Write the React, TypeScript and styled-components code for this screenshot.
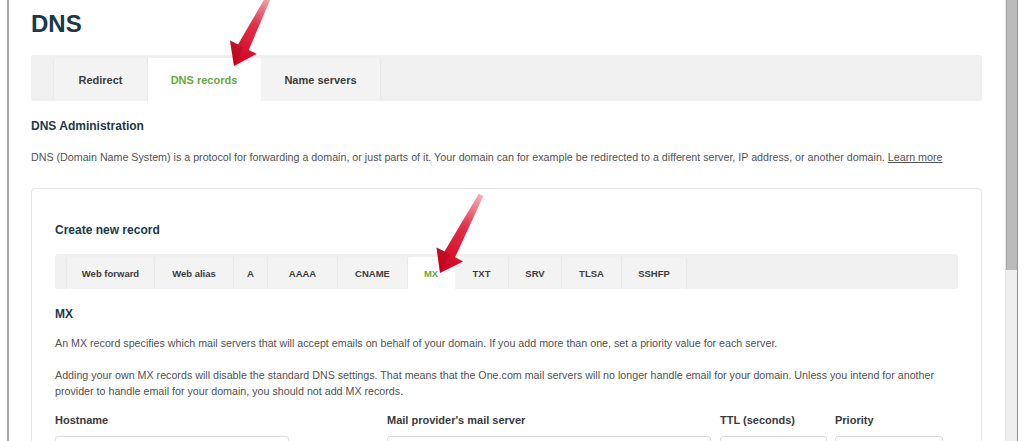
import React from 'react'
import styled, { createGlobalStyle } from 'styled-components'

const GlobalStyle = createGlobalStyle`
  html, body {
    margin: 0;
    padding: 0;
    background: #fff;
  }
  body {
    font-family: 'Liberation Sans', Arial, sans-serif;
    color: #4a4a4a;
  }
  * {
    box-sizing: border-box;
  }
`

const Shell = styled.div`
  position: relative;
  display: flex;
  width: 1024px;
  height: 441px;
  overflow: hidden;
  background: #fff;
`

const Page = styled.main`
  flex: 1;
  min-width: 0;
  margin-left: 7px;
  border-left: 2px solid #a6a6a6;
  padding: 10px 23px 0 22px;
`

const Scrollbar = styled.div`
  width: 13px;
  margin-right: 6px;
  background: #efefef;
  border-left: 1px solid #e2e2e2;
  border-right: 1px solid #8f8f8f;
`

const Thumb = styled.div`
  height: 270px;
  background: #bbbbbb;
  border-left: 1px solid #a9a9a9;
`

const Title = styled.h1`
  margin: 0;
  font-size: 24px;
  line-height: 28px;
  font-weight: 700;
  color: #1a3846;
`

const TabBar = styled.div<{ $inset: number; $height: number; $gap: number }>`
  display: flex;
  align-items: flex-end;
  height: ${p => p.$height}px;
  margin-top: ${p => p.$gap}px;
  padding-left: ${p => p.$inset}px;
  background: #f0f0f0;
  border-radius: 3px;
`

const Tab = styled.div<{ $active?: boolean; $small?: boolean; $width: number }>`
  display: flex;
  align-items: center;
  justify-content: center;
  width: ${p => p.$width}px;
  height: calc(100% - 3px);
  background: ${p => (p.$active ? '#fff' : '#f3f3f3')};
  border-right: 1px solid ${p => (p.$active ? '#fff' : '#e9e9e9')};
  border-radius: 2px 2px 0 0;
  font-size: ${p => (p.$small ? '9.5px' : '11px')};
  font-weight: 700;
  color: ${p => (p.$active ? '#66a83e' : '#3c3c3c')};
  white-space: nowrap;
  &:first-child {
    border-left: 1px solid #e9e9e9;
  }
`

const SectionTitle = styled.h2<{ $gap: number }>`
  margin: ${p => p.$gap}px 0 0;
  font-size: 12px;
  line-height: 16px;
  font-weight: 700;
  color: #1c3a48;
`

const Text = styled.p<{ $gap: number }>`
  margin: ${p => p.$gap}px 0 0;
  font-size: 10.7px;
  line-height: 16px;
  color: #525252;
`

const MoreLink = styled.a`
  color: #525252;
  text-decoration: underline;
`

const Card = styled.section`
  margin-top: 23px;
  height: 300px;
  border: 1px solid #e6e6e6;
  border-radius: 4px;
  padding: 33px 23px 0;
`

const FormGrid = styled.div`
  display: grid;
  grid-template-columns: 332px 333px 115px 108px;
  margin-top: 13px;
`

const Field = styled.div`
  display: flex;
  flex-direction: column;
  gap: 8px;
`

const Label = styled.label`
  font-size: 11px;
  line-height: 16px;
  font-weight: 700;
  color: #3a3a3a;
`

const Input = styled.input<{ $width: number }>`
  width: ${p => p.$width}px;
  height: 32px;
  border: 1px solid #dcdcdc;
  border-radius: 3px;
  background: #fff;
  outline: none;
`

const Overlay = styled.svg`
  position: absolute;
  left: 0;
  top: 0;
  pointer-events: none;
`

const topTabs = [
  { label: 'Redirect', width: 95 },
  { label: 'DNS records', width: 113 },
  { label: 'Name servers', width: 120 }
]

const recordTabs = [
  { label: 'Web forward', width: 89 },
  { label: 'Web alias', width: 79 },
  { label: 'A', width: 34 },
  { label: 'AAAA', width: 70 },
  { label: 'CNAME', width: 70 },
  { label: 'MX', width: 47 },
  { label: 'TXT', width: 54 },
  { label: 'SRV', width: 53 },
  { label: 'TLSA', width: 60 },
  { label: 'SSHFP', width: 65 }
]

const fields = [
  { label: 'Hostname', width: 234 },
  { label: "Mail provider's mail server", width: 324 },
  { label: 'TTL (seconds)', width: 107 },
  { label: 'Priority', width: 108 }
]

type Pt = [number, number]

function Arrow({ tail, tip, id }: { tail: Pt; tip: Pt; id: string }) {
  const dx = tip[0] - tail[0]
  const dy = tip[1] - tail[1]
  const len = Math.hypot(dx, dy)
  const u: Pt = [dx / len, dy / len]
  const v: Pt = [u[1], -u[0]]
  const at = (base: Pt, k: number): Pt => [base[0] + v[0] * k, base[1] + v[1] * k]
  const b: Pt = [tip[0] - u[0] * 21, tip[1] - u[1] * 21]
  const pts = [tip, at(b, -15), at(b, -6), at(tail, -2.5), at(tail, 2.5), at(b, 6), at(b, 15)]
  const shade = [tip, at(b, -15), at(b, -6), b]
  const str = (list: Pt[]) => list.map(p => p.join(',')).join(' ')

  return (
    <g>
      <defs>
        <linearGradient
          id={id}
          gradientUnits="userSpaceOnUse"
          x1={tail[0]}
          y1={tail[1]}
          x2={tip[0]}
          y2={tip[1]}
        >
          <stop offset="0" stopColor="#f4b0b8" />
          <stop offset="0.4" stopColor="#e43049" />
          <stop offset="1" stopColor="#cc001d" />
        </linearGradient>
      </defs>
      <polygon points={str(pts)} fill={`url(#${id})`} />
      <polygon points={str(shade)} fill="#a00014" opacity="0.3" />
    </g>
  )
}

export default function App() {
  return (
    <>
      <GlobalStyle />
      <Shell>
        <Page>
          <Title>DNS</Title>
          <TabBar $inset={22} $height={46} $gap={17}>
            {topTabs.map(t => (
              <Tab key={t.label} $width={t.width} $active={t.label === 'DNS records'}>
                {t.label}
              </Tab>
            ))}
          </TabBar>

          <SectionTitle $gap={17}>DNS Administration</SectionTitle>
          <Text $gap={15}>
            DNS (Domain Name System) is a protocol for forwarding a domain, or just parts of it. Your
            domain can for example be redirected to a different server, IP address, or another
            domain. <MoreLink href="#">Learn more</MoreLink>
          </Text>

          <Card>
            <SectionTitle $gap={0}>Create new record</SectionTitle>
            <TabBar $inset={11} $height={35} $gap={16}>
              {recordTabs.map(t => (
                <Tab key={t.label} $small $width={t.width} $active={t.label === 'MX'}>
                  {t.label}
                </Tab>
              ))}
            </TabBar>

            <SectionTitle $gap={17}>MX</SectionTitle>
            <Text $gap={13}>
              An MX record specifies which mail servers that will accept emails on behalf of your
              domain. If you add more than one, set a priority value for each server.
            </Text>
            <Text $gap={16}>
              Adding your own MX records will disable the standard DNS settings. That means that the
              One.com mail servers will no longer handle email for your domain. Unless you intend for
              another provider to handle email for your domain, you should not add MX records.
            </Text>

            <FormGrid>
              {fields.map(f => (
                <Field key={f.label}>
                  <Label>{f.label}</Label>
                  <Input $width={f.width} />
                </Field>
              ))}
            </FormGrid>
          </Card>
        </Page>
        <Scrollbar>
          <Thumb />
        </Scrollbar>

        <Overlay width={1024} height={441}>
          <Arrow id="arrow-top" tail={[269, -4]} tip={[234, 66]} />
          <Arrow id="arrow-mx" tail={[481, 195]} tip={[440, 273]} />
        </Overlay>
      </Shell>
    </>
  )
}
